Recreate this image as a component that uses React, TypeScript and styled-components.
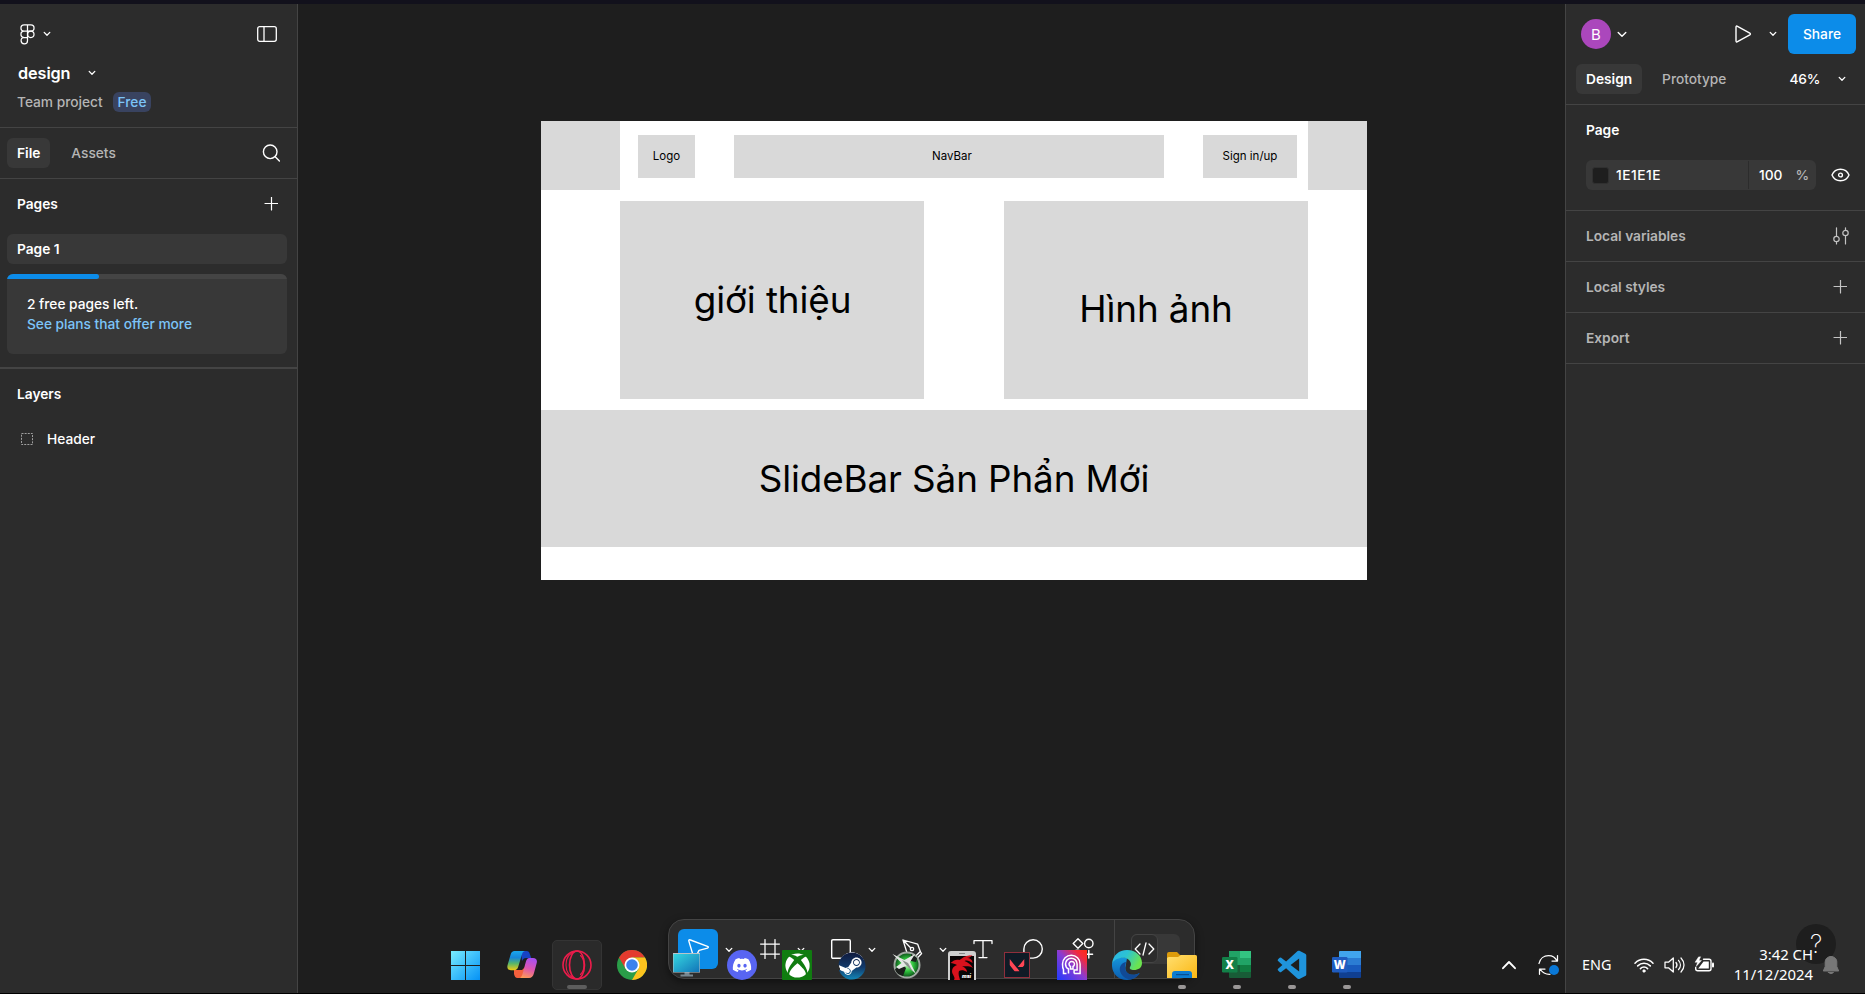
import React from "react";
import styled, { createGlobalStyle } from "styled-components";
import { FaDiscord, FaXbox, FaSteam } from "react-icons/fa";
import { SiValorant } from "react-icons/si";
import { BiLogoVisualStudio } from "react-icons/bi";

const GlobalStyle = createGlobalStyle`
  * { box-sizing: border-box; }
  body { margin: 0; background: #1e1e1e; overflow: hidden; }
  svg { display: block; flex: none; }
`;

const Screen = styled.div`
  position: relative;
  display: flex;
  flex-direction: column;
  width: 1865px;
  height: 994px;
  border-top: 4px solid #12111c;
  border-bottom: 1px solid #000;
  background: #1e1e1e;
  color: #fff;
  font: 450 13.75px/20px Inter, "Liberation Sans", sans-serif;
  letter-spacing: -0.02px;
  overflow: hidden;
`;

const Workspace = styled.div`
  display: flex;
  flex: 1;
`;

const Panel = styled.aside<{ $side: "left" | "right" }>`
  width: ${(p) => (p.$side === "left" ? 298 : 300)}px;
  flex: none;
  background: #2c2c2c;
  ${(p) => (p.$side === "left" ? "border-right" : "border-left")}: 1px solid #444;
`;

const Section = styled.section<{ $h: number; $line?: number; $pad?: string }>`
  height: ${(p) => p.$h}px;
  padding: ${(p) => p.$pad ?? "0"};
  border-bottom: ${(p) => p.$line ?? 1}px solid #444;
`;

const Row = styled.div<{ $h: number; $pad?: string; $gap?: number; $between?: boolean }>`
  display: flex;
  align-items: center;
  height: ${(p) => p.$h}px;
  padding: ${(p) => p.$pad ?? "0"};
  gap: ${(p) => p.$gap ?? 0}px;
  justify-content: ${(p) => (p.$between ? "space-between" : "flex-start")};
`;

const Label = styled.span<{ $strong?: boolean; $muted?: boolean }>`
  font-weight: ${(p) => (p.$strong ? 600 : 450)};
  color: ${(p) => (p.$muted ? "#b5b5b5" : "#fff")};
  white-space: nowrap;
`;

const Zoom = styled.span`
  font-weight: 550;
  letter-spacing: -0.3px;
`;

const FileName = styled.h1`
  margin: 0;
  font-size: 16.25px;
  font-weight: 600;
  letter-spacing: -0.1px;
`;

const PlanBadge = styled.span`
  height: 20px;
  padding: 0 5px;
  border-radius: 6px;
  background: #394360;
  color: #7cc4f8;
`;

const Tab = styled.button<{ $active?: boolean }>`
  height: 30px;
  padding: 0 10px;
  border: 0;
  border-radius: 6px;
  background: ${(p) => (p.$active ? "#383838" : "transparent")};
  color: ${(p) => (p.$active ? "#fff" : "#b5b5b5")};
  font: inherit;
  letter-spacing: inherit;
  font-weight: ${(p) => (p.$active ? 600 : 450)};
`;

const PageRow = styled.div`
  height: 30px;
  margin: 5px 10px 10px 7px;
  padding: 5px 10px;
  border-radius: 6px;
  background: #383838;
  font-weight: 600;
`;

const PlanCard = styled.div`
  height: 80px;
  margin: 0 10px 0 7px;
  border-radius: 6px;
  background: #383838;
  overflow: hidden;
`;

const Meter = styled.div`
  height: 5px;
  background: #444;
`;

const MeterFill = styled.div`
  width: 92px;
  height: 5px;
  border-radius: 0 3px 3px 0;
  background: #0c8ce9;
`;

const PlanText = styled.p`
  margin: 15px 20px 0;
`;

const PlanLink = styled.a`
  display: block;
  color: #7cc4f8;
`;

const Avatar = styled.div`
  width: 30px;
  height: 30px;
  border-radius: 50%;
  background: #ab47bc;
  font-size: 15px;
  font-weight: 400;
  line-height: 31px;
  text-align: center;
`;

const ShareButton = styled.button`
  width: 68px;
  height: 40px;
  border: 0;
  border-radius: 6px;
  background: #0c8ce9;
  color: #fff;
  font: inherit;
  font-weight: 550;
`;

const Spacer = styled.div<{ $w?: number }>`
  ${(p) => (p.$w ? `width: ${p.$w}px; flex: none;` : "flex: 1;")}
`;

const FillInput = styled.div`
  display: flex;
  align-items: center;
  width: 230px;
  height: 30px;
  border-radius: 6px;
  background: #383838;
`;

const Swatch = styled.div`
  width: 17px;
  height: 17px;
  margin: 0 7px 0 6px;
  border: 1px solid #303030;
  border-radius: 3px;
  background: #1e1e1e;
`;

const Hex = styled.span`
  width: 132px;
  letter-spacing: 0.5px;
`;

const Opacity = styled.div`
  display: flex;
  align-items: center;
  gap: 13px;
  height: 28px;
  padding-left: 10px;
  border-left: 1px solid #2c2c2c;
`;

const Canvas = styled.main`
  flex: 1;
  padding: 117px 0 0 243px;
`;

const Artboard = styled.div`
  width: 826px;
  height: 459px;
  background: #fff;
  color: #000;
  letter-spacing: 0;
`;

const ArtRow = styled.div<{ $h: number; $mb: number }>`
  display: flex;
  align-items: flex-start;
  height: ${(p) => p.$h}px;
  margin-bottom: ${(p) => p.$mb}px;
`;

const Block = styled.div<{ $w: number; $h: number; $ml?: number; $mt?: number; $big?: boolean; $pad?: string }>`
  display: flex;
  align-items: center;
  justify-content: center;
  flex: none;
  width: ${(p) => p.$w}px;
  height: ${(p) => p.$h}px;
  margin: ${(p) => p.$mt ?? 0}px 0 0 ${(p) => p.$ml ?? 0}px;
  padding: ${(p) => p.$pad ?? "0"};
  background: #d9d9d9;
  font-size: ${(p) => (p.$big ? 36.8 : 11.5)}px;
  font-weight: 400;
  letter-spacing: ${(p) => (p.$big ? -0.1 : 0)}px;
  white-space: nowrap;
`;

const Toolbar = styled.div`
  position: absolute;
  left: 668px;
  top: 915px;
  display: flex;
  width: 527px;
  height: 60px;
  padding: 9px 0 0 9px;
  border: 1px solid #444;
  border-radius: 16px;
  background: #2c2c2c;
  box-shadow: 0 3px 8px rgba(0, 0, 0, 0.45);
`;

const ToolGroup = styled.div<{ $w: number }>`
  display: flex;
  width: ${(p) => p.$w}px;
  height: 40px;
  flex: none;
`;

const ToolButton = styled.button<{ $active?: boolean }>`
  display: grid;
  place-items: center;
  width: 40px;
  height: 40px;
  padding: 0;
  border: 0;
  border-radius: 6px;
  color: #fff;
  background: ${(p) => (p.$active ? "#0c8ce9" : "transparent")};
`;

const ToolMenu = styled.div`
  display: grid;
  place-items: center;
  width: 22px;
  height: 41px;
`;

const ToolDivider = styled.div`
  width: 1px;
  height: 58px;
  margin: -9px 16px 0 1px;
  background: #444;
`;

const DevToggle = styled.div`
  width: 49px;
  height: 30px;
  margin-top: 5px;
  border-radius: 6px;
  background: #383838;
`;

const DevKnob = styled.div`
  display: grid;
  place-items: center;
  width: 27px;
  height: 29px;
  border: 1px solid #444;
  border-radius: 6px;
  background: #2c2c2c;
`;

const HelpButton = styled.div`
  position: absolute;
  left: 1796px;
  top: 920px;
  width: 40px;
  height: 40px;
  border-radius: 50%;
  background: #1e1e1e;
  font-size: 25px;
  font-weight: 250;
  line-height: 40px;
  text-align: center;
`;

const Taskbar = styled.div`
  position: absolute;
  left: 0;
  right: 0;
  top: 936px;
  display: flex;
  height: 50px;
  padding-left: 437.5px;
`;

const AppSlot = styled.div<{ $active?: boolean }>`
  display: flex;
  flex-direction: column;
  align-items: center;
  width: 50px;
  height: 50px;
  margin: 0 2.5px;
  padding-top: ${(p) => (p.$active ? 9 : 10)}px;
  border-radius: 5px;
  ${(p) => p.$active && "background: #2a2a2a; border: 1px solid #343434;"}
  &:first-child { margin-right: 4.5px; }
`;

const RunMark = styled.i<{ $active?: boolean }>`
  width: ${(p) => (p.$active ? 20 : 8)}px;
  height: 4px;
  margin-top: 5px;
  border-radius: 2px;
  background: ${(p) => (p.$active ? "#5d5d5d" : "#9a9797")};
`;

const IconTile = styled.div<{ $bg: string; $round?: boolean }>`
  display: grid;
  place-items: center;
  width: 30px;
  height: 30px;
  border-radius: ${(p) => (p.$round ? "50%" : "1px")};
  background: ${(p) => p.$bg};
  color: #fff;
`;

const Tray = styled.div`
  display: flex;
  align-items: center;
  margin-left: 126px;
  color: #fff;
  font-family: "Noto Sans", "Open Sans", sans-serif;
  font-weight: 400;
  font-size: 14.4px;
  letter-spacing: 0;
`;

const Language = styled.span`
  width: 28px;
  margin: 0 24px 0 22.5px;
`;

const Clock = styled.div`
  width: 90px;
  margin: -2px 9px 0 8px;
  font-size: 14.9px;
  line-height: 20px;
  text-align: right;
  white-space: nowrap;
`;

type IconProps = { w: number; h: number; children: React.ReactNode; color?: string; sw?: number };

const Icon = ({ w, h, children, color = "#fff", sw = 1.25 }: IconProps) => (
  <svg width={w} height={h} viewBox={`0 0 ${w} ${h}`} fill="none" stroke={color} strokeWidth={sw} strokeLinecap="round" strokeLinejoin="round">
    {children}
  </svg>
);

const Chevron = ({ big }: { big?: boolean }) =>
  big ? (
    <Icon w={10} h={7} sw={1.4}><path d="M1.2 1.5 5 5.2l3.8-3.7" /></Icon>
  ) : (
    <Icon w={8} h={6} sw={1.3}><path d="M1.2 1.4 4 4.2l2.8-2.8" /></Icon>
  );

const Plus = ({ color = "#fff" }: { color?: string }) => (
  <Icon w={14} h={14} color={color} sw={1.2}><path d="M7.500 0v13M1 6.500h13" /></Icon>
);

const FigmaMark = () => (
  <Icon w={15} h={21} sw={1.25}>
    <path d="M7.5.9H4.1a3.1 3.1 0 0 0 0 6.3h3.4zM7.5.9h3.4a3.1 3.1 0 0 1 0 6.3H7.5zM7.5 7.2H4.1a3.1 3.1 0 0 0 0 6.3h3.4zM4.1 13.5a3.2 3.2 0 1 0 3.4 3.2v-3.2z" />
    <circle cx="10.8" cy="10.3" r="3.2" />
  </Icon>
);

const WindowsIcon = () => (
  <svg width="30" height="30" viewBox="0 0 30 30">
    <defs>
      <linearGradient id="win" x1="0" y1="0" x2="30" y2="30" gradientUnits="userSpaceOnUse">
        <stop stopColor="#7df0ff" /><stop offset=".5" stopColor="#3fc0fb" /><stop offset="1" stopColor="#0591f5" />
      </linearGradient>
    </defs>
    <path fill="url(#win)" d="M1 1h14v14H1zM16 1h14v14H16zM1 16h14v14H1zM16 16h14v14H16z" />
  </svg>
);

const CopilotIcon = () => (
  <svg width="30" height="30" viewBox="0 0 30 30">
    <defs>
      <linearGradient id="cpA" x1="0" y1="0" x2="0" y2="1">
        <stop stopColor="#1aa7ee" /><stop offset=".35" stopColor="#1686d8" /><stop offset=".65" stopColor="#58b56a" /><stop offset="1" stopColor="#f2cb13" />
      </linearGradient>
      <linearGradient id="cpB" x1="0.6" y1="0" x2="0.3" y2="1">
        <stop stopColor="#a94ff0" /><stop offset=".5" stopColor="#dd55b0" /><stop offset="1" stopColor="#ff9a55" />
      </linearGradient>
    </defs>
    <path fill="#1743c4" d="M14 1h5.500c2 0 2.800 1.200 3.400 3.200L24.200 8H19c-2 0-3 1-4 3z" />
    <path fill="#f4603c" d="M7 20h8l3-3-2 8c-.6 2-2 3-4 3h-1.500c-2 0-2.800-1.500-3.500-4z" />
    <path fill="url(#cpA)" d="M7.500 1H18c-2 .3-2.600 2-3.200 4l-3.500 11.500c-.7 2.500-2 3.700-4.300 3.700H4C.8 20.200-.2 18 .6 15L3.500 5C4.300 2 5.500 1 7.500 1z" />
    <path fill="url(#cpB)" d="M22.500 8H26c3.200 0 4.500 2 3.700 5L27 23c-.8 3.200-2.500 5-5 5H12c2-.4 2.800-1.600 3.500-4l3.300-12c.8-2.700 1.700-4 3.700-4z" />
  </svg>
);

const OperaIcon = () => (
  <Icon w={30} h={30} color="#ec1c4b" sw={1.6}>
    <circle cx="15" cy="15" r="14" />
    <ellipse cx="15" cy="15" rx="7.500" ry="14" />
    <path d="M14 1.300C7 3 4 8 4 15s3 12 10 13.700M18.500 5.500C21 8 22 11 22 15s-1 7-3.500 9.500" strokeWidth="1.100" />
  </Icon>
);

const ChromeIcon = () => (
  <svg width="30" height="30" viewBox="0 0 30 30">
    <circle cx="15" cy="15" r="15" fill="#2a9d48" />
    <path fill="#e33b2e" d="M2 7.500A15 15 0 0 1 28 7.500H15L8.500 18.700z" />
    <path fill="#fcc31e" d="M28 7.500A15 15 0 0 1 15 30l6.500-11.200L21.500 11 15 7.500z" />
    <circle cx="15" cy="15" r="7.500" fill="#fff" />
    <circle cx="15" cy="15" r="5.800" fill="#3b82ee" />
  </svg>
);

const MonitorIcon = () => (
  <svg width="30" height="30" viewBox="0 0 30 30">
    <defs>
      <linearGradient id="mon" x1="0" y1="0" x2="1" y2="1"><stop stopColor="#35d6e0" /><stop offset="1" stopColor="#1174b8" /></linearGradient>
    </defs>
    <path fill="#788891" d="M12.500 22h5v2.500h3.500v2H8.500v-2h4z" />
    <path fill="#b9c4ca" d="M1 3h27v19.500H1z" />
    <path fill="url(#mon)" d="M1.500 4h26v18h-26z" />
  </svg>
);

const SteamIcon = () => (
  <IconTile $bg="radial-gradient(circle, #fff 12.5px, transparent 13px)" $round>
    <svg width="0" height="0"><defs>
      <linearGradient id="steam" x1="0" y1="0" x2="0" y2="1"><stop stopColor="#101a3d" /><stop offset=".55" stopColor="#123a6b" /><stop offset="1" stopColor="#1387b8" /></linearGradient>
    </defs></svg>
    <FaSteam size={28} fill="url(#steam)" strokeWidth={0} />
  </IconTile>
);

const JetIcon = () => (
  <svg width="30" height="30" viewBox="0 0 30 30">
    <defs><radialGradient id="jet"><stop stopColor="#baf5b5" /><stop offset=".5" stopColor="#2fc43c" /><stop offset="1" stopColor="#0b4a19" /></radialGradient></defs>
    <circle cx="15" cy="15" r="12.500" fill="url(#jet)" stroke="#a2aaa3" strokeWidth="2" />
    <path fill="#1b1f1c" d="m3 19 8-4 3 3-3 8c-4-1-7-3-8-7zM19 4l6 4-1 4-5-1z" />
    <path fill="#e4e8e4" d="m.5 4 12 6L23 4l-5 8 6 12-9-8.500L7 19l-3-2 5.500-4z" />
    <path fill="#8a938c" d="m10 10 6 3 5 9-7-7z" />
  </svg>
);

const DragonIcon = () => (
  <svg width="30" height="30" viewBox="0 0 30 30">
    <path fill="#cfcfcf" d="M1 30V4q0-3 3-3h22q3 0 3 3v26z" />
    <path fill="#090506" d="M3 6h24v24H3z" />
    <path fill="#888" d="M12 3h6v1h-6z" />
    <path fill="#d8121d" d="M3.500 13c3-3 6-4 9-3l3-2c4-3 7-2 10-3-2 2-3 3-6 3 4 0 6 2 6 5-3-2-5-3-8-2 3 1 6 3 8.500 7-5-3-8-1-11-2 4 2 5 4 5 6-3-2-6-2-8-1-1 3 0 5 1 9H7c2-3-2-5-2-9 0-3 2-5 5-6-2-1-4-2-6.500-2z" />
    <text x="15" y="28" fill="#fff" fontFamily="Inter" fontSize="5" fontWeight="900" fontStyle="italic">msi</text>
  </svg>
);

const FaceIcon = () => (
  <svg width="30" height="30" viewBox="0 0 30 30">
    <defs><linearGradient id="face" x1="0" y1="1" x2="1" y2="0"><stop stopColor="#203bff" /><stop offset=".5" stopColor="#8b3bd2" /><stop offset=".8" stopColor="#f22a3d" /><stop offset="1" stopColor="#ff2a13" /></linearGradient></defs>
    <path fill="url(#face)" d="M0 0h30v30H0z" />
    <g fill="none" stroke="#fff" strokeWidth="1.500">
      <path d="M9.500 23.500h-3v-4c-1-1.500-1-3.500-1-5.500a8.800 8.800 0 0 1 17.600 0v9.500h-6" />
      <path d="M11.500 23.500v-4.500c-2-1-3-3-3-5a5.800 5.800 0 0 1 11.600 0v6h-3v3.500" />
      <path d="M13.500 19v-2.500a2.700 2.700 0 1 1 2.500 0V19z" />
    </g>
  </svg>
);

const EdgeIcon = () => (
  <svg width="30" height="30" viewBox="0 0 30 30">
    <defs>
      <linearGradient id="edA" x1="0" y1="0" x2="1" y2=".4"><stop stopColor="#2bb3ea" /><stop offset=".5" stopColor="#2cc3d2" /><stop offset="1" stopColor="#6be34f" /></linearGradient>
      <linearGradient id="edB" x1="0" y1="0" x2="0" y2="1"><stop stopColor="#1697dc" /><stop offset="1" stopColor="#0b5cb0" /></linearGradient>
    </defs>
    <path fill="url(#edB)" d="M15 8C8 6 1 9 0 14c-.5 9 6 16 15 16 6 0 10-3 12.500-7-7 4-15 1-14-6z" />
    <path fill="#114a96" d="M14 12c-5 1-7 5-6 9 1.500 5 6 9 12 8 3-1 6-3 8-6-7 4-16 1-15-7z" />
    <path fill="url(#edA)" d="M0 14C1 5 7 0 15 0c9 0 15 6 15 13 0 5-4 7-8 7-3 0-5-1-4-3 2-2 1-7-4-9-6-1-12 1-14 6z" />
  </svg>
);

const FolderIcon = () => (
  <svg width="30" height="30" viewBox="0 0 30 30">
    <defs><linearGradient id="fold" x1="0" y1="0" x2="1" y2="1"><stop stopColor="#ffdf70" /><stop offset="1" stopColor="#fbb713" /></linearGradient></defs>
    <path fill="#dc9b0b" d="M0 4q0-2 2-2h8l3 3h15q2 0 2 2v6H0z" />
    <path fill="url(#fold)" d="M0 8.500q0-1.500 2-1.500h9l3-2h14q2 0 2 2v21H0z" />
    <path fill="#0c7cd0" d="M5 28v-4q0-3 3-3h14q3 0 3 3v4z" />
    <path fill="#084f92" d="M9 24h13v1.200H9z" />
  </svg>
);

const OfficeIcon = ({ letter, tones, badge }: { letter: string; tones: string[]; badge: string }) => (
  <svg width="30" height="30" viewBox="0 0 30 30">
    <path fill={tones[0]} d="M7 2q0-1 1-1h21v7H7z" />
    <path fill={tones[1]} d="M7 8h22v7H7z" />
    <path fill={tones[2]} d="M7 15h22v7H7z" />
    <path fill={tones[3]} d="M7 22h22v5q0 1-1 1H8q-1 0-1-1z" />
    {letter === "X" && <path fill="#21a366" d="M7 1h11v7H7z" />}
    {letter === "X" && <path fill="#185c37" d="M7 15h11v7H7z" />}
    <rect y="7" width="15.500" height="15.500" rx="1.200" fill={badge} />
    <text x="7.700" y="18.800" fill="#fff" fontFamily="Open Sans" fontSize="11.500" fontWeight="800" textAnchor="middle">{letter}</text>
  </svg>
);

const UpIcon = () => <Icon w={16} h={10} sw={1.9}><path d="m2 8.200 6-6.200 6 6.200" /></Icon>;

const SyncIcon = () => (
  <Icon w={22} h={22} sw={1.25}>
    <path d="M1 9.500C2 4.500 6 1.500 10.500 1.500c4 0 7 2 8.500 5.500M19.500 1.500V7H14M12 20.300C7 20.500 4 18 2 15M1.500 20.300V15H7" />
    <circle cx="16" cy="16" r="5" fill="#0a78d6" stroke="none" />
  </Icon>
);

const WifiIcon = () => (
  <Icon w={20} h={16} sw={1.5}>
    <path d="M1 6.200c5-5.200 13-5.200 18 0M3.700 8.900c3.600-3.600 9-3.600 12.600 0M6.400 11.600c2-2 5.200-2 7.200 0" />
    <circle cx="10" cy="14" r="1.200" fill="#fff" strokeWidth=".8" />
  </Icon>
);

const SpeakerIcon = () => (
  <Icon w={21} h={18} sw={1.25}>
    <path d="M1 6.200h3.500L9.300 2v14L4.500 11.800H1zM12 6.500c1.200 1.500 1.200 3.500 0 5M14.500 4.300c2.500 2.800 2.500 6.600 0 9.400M17 2c4 4.200 4 9.800 0 14" />
  </Icon>
);

const BatteryIcon = () => (
  <Icon w={21} h={18} sw={1.4}>
    <path d="M9.500 3.200h5.500q2 0 2 2v7.600q0 2-2 2H3.700q-2 0-2-2v-1.300" />
    <path d="M19 7.500v3" strokeWidth="2" />
    <path fill="#fff" stroke="none" d="M9.500 5.500h5.300v7H4.200l.8-1z" />
    <path fill="#fff" strokeWidth=".4" d="M4.500 1 1 6.300h2.500L2.200 10.500 7.500 4.500H5L6.500 1z" />
  </Icon>
);

const BellIcon = () => (
  <Icon w={18} h={20} sw={1}>
    <path fill="#777" stroke="#777" d="M9 1.500C5.500 1.500 3.200 3.900 3.200 7v4.600L1.300 16h15.400l-1.900-4.400V7C14.800 3.900 12.500 1.500 9 1.500zM6.500 17.500h5q-2.500 2.500-5 0z" />
  </Icon>
);

const apps: { key: string; icon: React.ReactNode; active?: boolean; running?: boolean }[] = [
  { key: "start", icon: <WindowsIcon /> },
  { key: "copilot", icon: <CopilotIcon /> },
  { key: "opera", icon: <OperaIcon />, active: true },
  { key: "chrome", icon: <ChromeIcon /> },
  { key: "monitor", icon: <MonitorIcon /> },
  { key: "discord", icon: <IconTile $bg="#5865f2" $round><FaDiscord size={20} /></IconTile> },
  { key: "xbox", icon: <IconTile $bg="#107c10"><FaXbox size={25} /></IconTile> },
  { key: "steam", icon: <SteamIcon /> },
  { key: "jet", icon: <JetIcon /> },
  { key: "dragon", icon: <DragonIcon /> },
  {
    key: "valorant",
    icon: (
      <svg width="30" height="30" viewBox="0 0 30 30">
        <rect x="2.500" y="2.500" width="25" height="25" fill="#101b26" stroke="#8f2f3c" />
        <SiValorant x="7.500" y="7.500" size={15} color="#ff4655" strokeWidth={0} />
      </svg>
    ),
  },
  { key: "face", icon: <FaceIcon /> },
  { key: "edge", icon: <EdgeIcon /> },
  { key: "folder", icon: <FolderIcon />, running: true },
  { key: "excel", icon: <OfficeIcon letter="X" tones={["#33c481", "#21a366", "#107c41", "#185c37"]} badge="#128048" />, running: true },
  { key: "code", icon: <BiLogoVisualStudio size={30} color="#1f94dc" viewBox="1.500 1.500 21 21" />, running: true },
  { key: "word", icon: <OfficeIcon letter="W" tones={["#41a5ee", "#2b7cd3", "#185abd", "#103f91"]} badge="#1f5cc0" />, running: true },
];

const MoveIcon = () => <Icon w={22} h={22} sw={1.4}><path d="M2 3.600Q1.200 1.200 3.500 2L20.500 8.300q1.700.9 0 1.800L12 12.400 8.500 19.200q-1 1.500-1.800 0z" /></Icon>;
const FrameIcon = () => <Icon w={20} h={20} sw={1.25}><path d="M5 .6v18.800M15 .6v18.800M.6 5h18.800M.6 15h18.800" /></Icon>;
const RectIcon = () => <Icon w={20} h={20} sw={1.4}><rect x=".7" y=".7" width="18.600" height="18.600" rx="1.200" /></Icon>;
const PenIcon = () => (
  <Icon w={22} h={22} sw={1.3}>
    <path d="M2 2 6.500 16.500l7.500 2.200 5.300-5.200-2.600-7.300zM2 2l7.800 8" />
    <circle cx="11" cy="11" r="1.700" /><path d="m19.300 13.500 1.300 2-4.500 4.700-2.100-1.500" />
  </Icon>
);
const TextIcon = () => <Icon w={20} h={20} sw={1.3}><path d="M1 4.500V1.600h18v2.900M10 1.600v17M6 18.600h8" /></Icon>;
const CommentIcon = () => <Icon w={20} h={20} sw={1.4}><path d="M.9 19.100V10A9.200 9.200 0 1 1 10 19.100z" /></Icon>;
const ActionsIcon = () => (
  <Icon w={22} h={22} sw={1.4}>
    <path d="m6 .8 4.800 4.700L6 10.200 1.200 5.500zM16.800 12.500v7.500M13 16.300h7.600" /><circle cx="16.800" cy="5.500" r="4.200" /><circle cx="5.500" cy="16.500" r="4.200" />
  </Icon>
);

const tools = [
  { key: "move", icon: <MoveIcon />, w: 72, active: true, menu: true },
  { key: "frame", icon: <FrameIcon />, w: 71, menu: true },
  { key: "rect", icon: <RectIcon />, w: 71, menu: true },
  { key: "pen", icon: <PenIcon />, w: 71, menu: true },
  { key: "text", icon: <TextIcon />, w: 50 },
  { key: "comment", icon: <CommentIcon />, w: 50 },
  { key: "actions", icon: <ActionsIcon />, w: 50 },
];

const LeftPanel = () => (
  <Panel $side="left">
    <Section $h={124}>
      <Row $h={60} $pad="0 20px" $gap={8}>
        <FigmaMark /><Chevron /><Spacer />
        <Icon w={20} h={16} sw={1.3}><rect x=".7" y=".7" width="18.600" height="14.600" rx="2" /><path d="M7 1v14" /></Icon>
      </Row>
      <Row $h={18} $pad="0 0 0 18px" $gap={18}><FileName>design</FileName><Chevron /></Row>
      <Row $h={40} $pad="0 0 0 17px" $gap={10}><Label $muted>Team project</Label><PlanBadge>Free</PlanBadge></Row>
    </Section>
    <Section $h={51}>
      <Row $h={49} $pad="0 17px 0 7px">
        <Tab $active>File</Tab><Spacer $w={11} /><Tab>Assets</Tab><Spacer />
        <Icon w={18} h={18} sw={1.4}><circle cx="8.200" cy="7.800" r="6.800" /><path d="m13.200 12.800 4.200 4.200" /></Icon>
      </Row>
    </Section>
    <Section $h={190} $line={2}>
      <Row $h={50} $pad="0 19px 0 17px" $between><Label $strong>Pages</Label><Plus /></Row>
      <PageRow>Page 1</PageRow>
      <PlanCard>
        <Meter><MeterFill /></Meter>
        <PlanText>2 free pages left.<PlanLink>See plans that offer more</PlanLink></PlanText>
      </PlanCard>
    </Section>
    <Row $h={50} $pad="0 17px"><Label $strong>Layers</Label></Row>
    <Row $h={40} $pad="0 0 0 21px" $gap={14}>
      <Icon w={12} h={12} color="#a0a0a0" sw={1}><rect x=".5" y=".5" width="11" height="11" strokeDasharray="2 1.140" strokeLinecap="butt" /></Icon>
      <Label>Header</Label>
    </Row>
  </Panel>
);

const RightPanel = () => (
  <Panel $side="right">
    <Section $h={101}>
      <Row $h={60} $pad="0 9px 0 15px">
        <Avatar>B</Avatar><Spacer $w={6} /><Chevron big /><Spacer />
        <Icon w={18} h={20} sw={1.4}><path d="M2 3.200q0-1.700 1.500-.9L15.800 9.200q1.200.8 0 1.600L3.500 17.700q-1.500.8-1.500-.9z" /></Icon>
        <Spacer $w={17} /><Chevron /><Spacer $w={11} /><ShareButton>Share</ShareButton>
      </Row>
      <Row $h={30} $pad="0 19px 0 10px">
        <Tab $active>Design</Tab><Spacer $w={10} /><Tab>Prototype</Tab><Spacer /><Zoom>46%</Zoom><Spacer $w={18} /><Chevron />
      </Row>
    </Section>
    <Section $h={106}>
      <Row $h={50} $pad="0 20px"><Label $strong>Page</Label></Row>
      <Row $h={40} $pad="0 15px 0 20px" $between>
        <FillInput>
          <Swatch /><Hex>1E1E1E</Hex>
          <Opacity><span>100</span><Label $muted>%</Label></Opacity>
        </FillInput>
        <Icon w={19} h={14} sw={1.4}><path d="M1 7c1.600-3.800 4.800-5.800 8.500-5.800S16.400 3.200 18 7c-1.600 3.800-4.800 5.800-8.500 5.800S2.600 10.800 1 7z" /><circle cx="9.500" cy="7" r="1.900" /></Icon>
      </Row>
    </Section>
    {["Local variables", "Local styles", "Export"].map((name, i) => (
      <Section key={name} $h={51}>
        <Row $h={50} $pad={i === 0 ? "0 15px 0 20px" : "0 18px 0 20px"} $between>
          <Label $strong $muted>{name}</Label>
          {i === 0 ? (
            <Icon w={17} h={18} color="#c4c4c4" sw={1.2}><path d="M3.500 .8v8.500M3.500 15v2M12.500 .8v2.500M12.500 9v8" /><circle cx="3.500" cy="12" r="2.700" /><circle cx="12.500" cy="6" r="2.700" /></Icon>
          ) : (
            <Plus color="#c4c4c4" />
          )}
        </Row>
      </Section>
    ))}
  </Panel>
);

const Wireframe = () => (
  <Artboard>
    <ArtRow $h={69} $mb={11}>
      <Block $w={79} $h={69} />
      <Block $w={57} $h={43} $ml={18} $mt={14} $pad="0 0 2px">Logo</Block>
      <Block $w={430} $h={43} $ml={39} $mt={14} $pad="0 0 2px 6px">NavBar</Block>
      <Block $w={94} $h={43} $ml={39} $mt={14} $pad="0 0 2px">Sign in/up</Block>
      <Block $w={59} $h={69} $ml={11} />
    </ArtRow>
    <ArtRow $h={198} $mb={11}>
      <Block $w={304} $h={198} $ml={79} $big $pad="0 0 0 1px">giới thiệu</Block>
      <Block $w={304} $h={198} $ml={80} $big $pad="17px 0 0">Hình ảnh</Block>
    </ArtRow>
    <ArtRow $h={137} $mb={0}>
      <Block $w={826} $h={137} $big>SlideBar Sản Phẩn Mới</Block>
    </ArtRow>
  </Artboard>
);

export default function App() {
  return (
    <Screen>
      <GlobalStyle />
      <Workspace>
        <LeftPanel />
        <Canvas><Wireframe /></Canvas>
        <RightPanel />
      </Workspace>
      <Toolbar>
        {tools.map((t) => (
          <ToolGroup key={t.key} $w={t.w}>
            <ToolButton $active={t.active}>{t.icon}</ToolButton>
            {t.menu && <ToolMenu><Chevron /></ToolMenu>}
          </ToolGroup>
        ))}
        <ToolDivider />
        <DevToggle><DevKnob>
          <Icon w={21} h={14} sw={1.3}><path d="M6 2 1.200 7 6 12M15 2l4.800 5L15 12M12 1 9 13" /></Icon>
        </DevKnob></DevToggle>
      </Toolbar>
      <HelpButton>?</HelpButton>
      <Taskbar>
        {apps.map((a) => (
          <AppSlot key={a.key} $active={a.active}>
            {a.icon}
            {(a.active || a.running) && <RunMark $active={a.active} />}
          </AppSlot>
        ))}
        <Tray>
          <UpIcon /><Spacer $w={21} /><SyncIcon />
          <Language>ENG</Language>
          <WifiIcon /><Spacer $w={10} /><SpeakerIcon /><Spacer $w={9} /><BatteryIcon />
          <Clock>3:42 CH<br />11/12/2024</Clock>
          <BellIcon />
        </Tray>
      </Taskbar>
    </Screen>
  );
}
